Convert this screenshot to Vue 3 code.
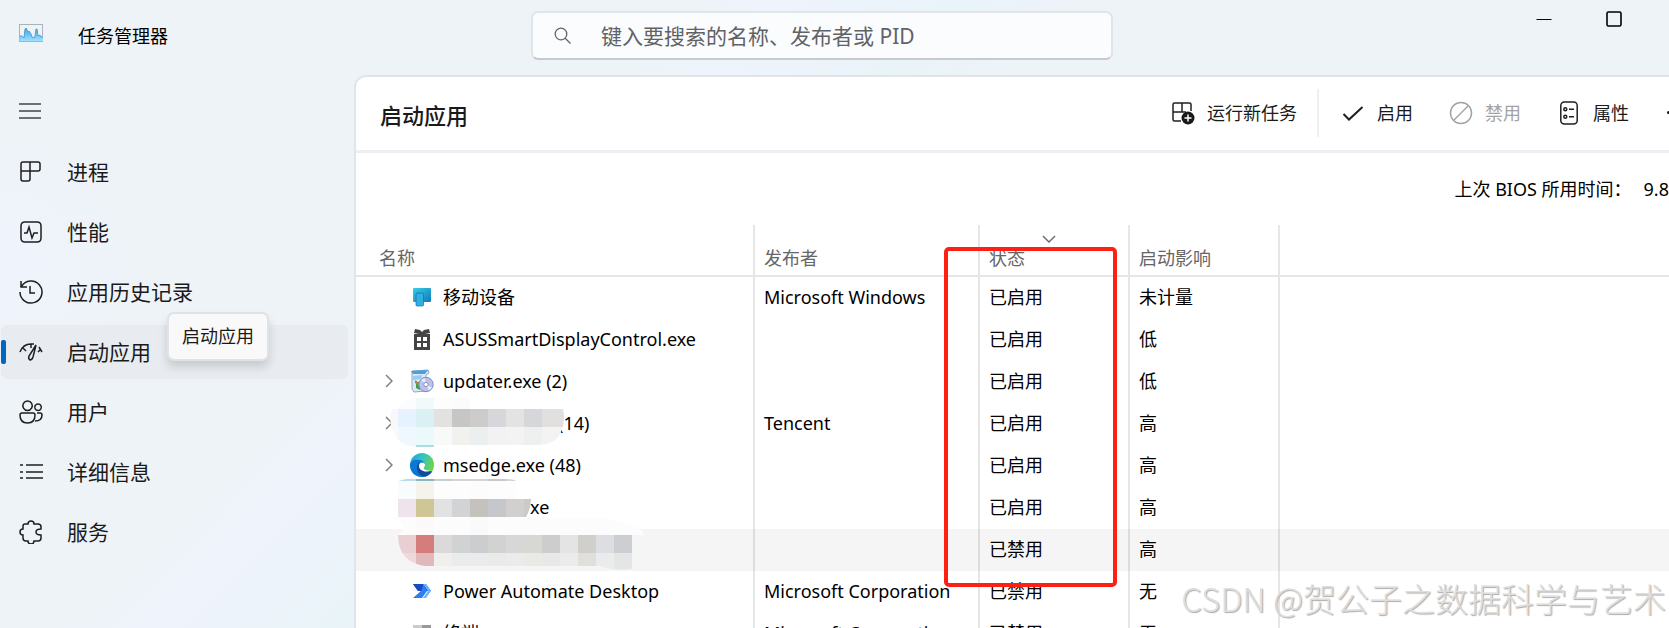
<template>
  <div class="window">
    <header class="titlebar">
      <div class="brand">
        <svg class="brand-logo" viewBox="0 0 24 18" aria-hidden="true">
          <defs>
            <linearGradient id="logoFill" x1="0" y1="0" x2="0" y2="1">
              <stop offset="0" stop-color="#3f9fdc" />
              <stop offset="1" stop-color="#9fe2ff" />
            </linearGradient>
          </defs>
          <rect x="0.5" y="0.5" width="23" height="17" fill="#f0f2f4" stroke="#a9b3bd" />
          <path
            d="M1 12l2 0 2 2 1-9 1-1 2 4 1-1 2 3 1 3 2 1 1-2 1-7 1 0 1 7 2-1 1 2 2 0v4H1z"
            fill="url(#logoFill)"
          />
          <path
            d="M1 12l2 0 2 2 1-9 1-1 2 4 1-1 2 3 1 3 2 1 1-2 1-7 1 0 1 7 2-1 1 2 2 0"
            fill="none"
            stroke="#4aa3dc"
          />
        </svg>
        <span class="brand-name">任务管理器</span>
      </div>
      <label class="search">
        <svg class="search-icon" viewBox="0 0 18 18" aria-hidden="true">
          <circle cx="7" cy="7" r="5.8" />
          <path d="M11.2 11.2L16.5 16.5" />
        </svg>
        <input
          class="search-input"
          type="text"
          aria-label="搜索"
          placeholder="键入要搜索的名称、发布者或 PID"
        />
      </label>
      <div class="window-controls">
        <button type="button" aria-label="最小化">
          <svg viewBox="0 0 16 16"><path d="M0.5 8.5h15" /></svg>
        </button>
        <button type="button" aria-label="最大化">
          <svg viewBox="0 0 16 16">
            <rect x="1" y="1" width="14" height="14" rx="1.5" stroke-width="1.6" />
          </svg>
        </button>
      </div>
    </header>

    <div class="body">
      <nav class="sidebar">
        <button class="menu-button" type="button" aria-label="导航">
          <svg viewBox="0 0 24 24"><path d="M1 5h22M1 12h22M1 19h22" /></svg>
        </button>
        <a
          v-for="item in navItems"
          :key="item.text"
          href="#"
          class="nav-item"
          :class="{ active: item.active }"
        >
          <svg class="nav-icon" viewBox="0 0 24 24" aria-hidden="true">
            <path v-for="d in item.paths" :key="d" :d="d" />
          </svg>
          <span>{{ item.text }}</span>
        </a>
        <div class="tooltip" role="tooltip">启动应用</div>
      </nav>

      <main class="panel">
        <div class="panel-header">
          <h1 class="panel-title">启动应用</h1>
          <div class="toolbar">
            <button class="tool tool-run" type="button">
              <svg viewBox="0 0 24 24" aria-hidden="true">
                <path d="M20 10V3.5Q20 2 18.5 2H3.500Q2 2 2 3.500V18.500Q2 20 3.500 20H10M2 11h9M11 2v9h4" />
                <circle cx="17" cy="17" r="6.500" class="solid" />
                <path d="M17 13.500v7M13.500 17h7" class="plus" />
              </svg>
              <span>运行新任务</span>
            </button>
            <button class="tool" type="button">
              <svg viewBox="0 0 24 24" aria-hidden="true">
                <path d="M2.500 13l5.500 5.500L21.500 6" stroke-width="2" />
              </svg>
              <span>启用</span>
            </button>
            <button class="tool" type="button" disabled>
              <svg viewBox="0 0 24 24" aria-hidden="true">
                <circle cx="12" cy="12" r="10.500" />
                <path d="M19 5L5 19" />
              </svg>
              <span>禁用</span>
            </button>
            <button class="tool" type="button">
              <svg viewBox="0 0 24 24" aria-hidden="true">
                <rect x="3.800" y="1" width="16.400" height="22" rx="3.500" />
                <circle cx="8.300" cy="8.300" r="1.500" />
                <circle cx="8.300" cy="15.700" r="1.500" />
                <path d="M12 8.300h5M12 15.700h5" />
              </svg>
              <span>属性</span>
            </button>
            <button class="tool-more" type="button" aria-label="更多">
              <i></i><i></i><i></i>
            </button>
          </div>
        </div>

        <div class="bios">
          <span>上次 BIOS 所用时间：</span>
          <span>9.8</span>
        </div>

        <div class="table-area">
          <table class="apps">
            <colgroup>
              <col class="col-name" />
              <col class="col-publisher" />
              <col class="col-status" />
              <col class="col-status" />
              <col />
            </colgroup>
            <thead>
              <tr>
                <th class="first">名称</th>
                <th>发布者</th>
                <th>
                  <svg class="sort" viewBox="0 0 14 8" aria-hidden="true">
                    <path d="M1 1l6 6 6-6" />
                  </svg>
                  状态
                </th>
                <th>启动影响</th>
                <th></th>
              </tr>
            </thead>
            <tbody>
              <tr v-for="(app, index) in apps" :key="index" :class="{ hovered: app.hovered }">
                <td>
                  <div class="name-cell">
                    <span class="expander">
                      <svg v-if="app.group" viewBox="0 0 8 14" aria-hidden="true">
                        <path d="M1 1l6 6-6 6" />
                      </svg>
                    </span>
                    <span class="app-icon">
                      <svg v-if="app.icon === 'mobile'" viewBox="0 0 24 24">
                        <defs>
                          <linearGradient id="mobileFill" x1="0" y1="0" x2="1" y2="1">
                            <stop offset="0" stop-color="#35d0e6" />
                            <stop offset="1" stop-color="#1478b8" />
                          </linearGradient>
                        </defs>
                        <rect x="3" y="3" width="18" height="14" rx="1" fill="url(#mobileFill)" />
                        <rect x="6" y="8" width="7.500" height="13" rx="1" fill="#2fb0e4" stroke="#15709f" stroke-width="0.700" />
                      </svg>
                      <svg v-else-if="app.icon === 'gift'" viewBox="0 0 24 24" fill="#444">
                        <path d="M5 2l5 1 2 2 2-2 5-1 1 4-5 1h5v16H4V7h5L4 6z" />
                        <path d="M7 10h4v4H7zM13 10h4v4h-4zM7 16h4v4H7zM13 16h4v4h-4z" fill="#fff" />
                      </svg>
                      <svg v-else-if="app.icon === 'installer'" viewBox="0 0 24 24">
                        <path d="M2 2l16-1 1 3-3 2v16l-12 1-2-3z" fill="#dce9f4" stroke="#8da9c4" />
                        <path d="M1 2l17-1-3 4H3z" fill="#4b9fe0" />
                        <path d="M3 7l9-1-1 4-8 1z" fill="#9ccbf0" />
                        <path d="M6 13h4v8l-4-2z" fill="#35a542" />
                        <path d="M5 11l3 2v3l-3-2z" fill="#e46b3f" />
                        <circle cx="16" cy="15.500" r="7.200" fill="#b9c1ee" stroke="#8088c0" />
                        <path d="M16 15.500L11 11l4-2zM16 15.500l6 3-3 3z" fill="#e7ebff" />
                        <circle cx="16" cy="15.500" r="2.200" fill="#fff" stroke="#8b8fb8" />
                      </svg>
                      <svg v-else-if="app.icon === 'edge'" viewBox="0 0 24 24">
                        <defs>
                          <linearGradient id="edgeTop" x1="0" y1="0" x2="1" y2="0.400">
                            <stop offset="0" stop-color="#1f9fdc" />
                            <stop offset="0.500" stop-color="#32c2c4" />
                            <stop offset="1" stop-color="#69d64b" />
                          </linearGradient>
                        </defs>
                        <circle cx="12" cy="12" r="12" fill="url(#edgeTop)" />
                        <path d="M0 12C1 7 5 6 9 7c4 0 6 3 6 6l-2 3 9 3c-2 3-6 5-10 5C5 24 0 19 0 12z" fill="#0c78d4" />
                        <path d="M9 9c-4 5-2 12 4 14.500 4 0 7-2 9-5.500-5 2-11 0-12-5z" fill="#114a9c" />
                        <path d="M12 9.500c-2 0-3 1.500-3 3.500 0 4.500 6 7 12 4.500-4 .5-8-1-7-3 2-2 1-5-2-5z" fill="#fff" />
                      </svg>
                      <svg v-else-if="app.icon === 'automate'" viewBox="0 0 24 24">
                        <path d="M3 5h13l5 7H8z" fill="#1b56d0" />
                        <path d="M13 5h3l5 7-5 7h-3l5-7z" fill="#66b7ff" />
                        <path d="M13 5l4 7-5 7H3l9-8z" fill="#2f7df0" />
                        <path d="M3 5h10l-2 7H8z" fill="#184bc0" />
                      </svg>
                      <svg v-else-if="app.icon === 'terminal'" viewBox="0 0 24 24">
                        <rect x="3" y="4" width="18" height="16" rx="1" fill="#444" />
                        <path d="M3 4h9v3H3z" fill="#ccc" />
                        <path d="M12 4h9v3h-9z" fill="#999" />
                      </svg>
                    </span>
                    <span v-if="app.censored" class="censored" :style="{ width: app.censored + 'px' }"></span>
                    <span>{{ app.name }}</span>
                  </div>
                </td>
                <td>{{ app.publisher }}</td>
                <td>{{ app.status }}</td>
                <td>{{ app.impact }}</td>
                <td></td>
              </tr>
            </tbody>
          </table>

          <!-- mosaic over the private names -->
          <svg class="mosaic" viewBox="388 390 260 184" aria-hidden="true">
            <defs>
              <clipPath id="blobA">
                <path d="M398 409Q404 398 420 398H470V409H563Q566 420 561 432Q556 445 536 445L434 447H416Q400 446 394 434Q388 422 392 409z" />
              </clipPath>
              <clipPath id="blobB">
                <path d="M398 481L406 479H505Q514 479 516 481V499H531Q531 508 526 517H398z" />
              </clipPath>
              <clipPath id="blobC">
                <path d="M392 517L600 518Q640 524 645 535H632V569Q612 571 600 566L425 566Q398 562 398 535L404 529Q402 522 392 517z" />
              </clipPath>
            </defs>
            <g v-for="patch in mosaic" :key="patch.clip" :clip-path="`url(#${patch.clip})`">
              <template v-for="row in patch.rows" :key="row.y">
                <rect
                  v-for="(color, i) in row.colors"
                  :key="i"
                  :x="380 + i * 18"
                  :y="row.y"
                  width="18"
                  :height="row.h"
                  :fill="color"
                  shape-rendering="crispEdges"
                />
              </template>
            </g>
          </svg>
          <div class="marker"></div>
        </div>
      </main>
    </div>
    <div class="watermark">CSDN @贺公子之数据科学与艺术</div>
  </div>
</template>

<script setup>
const navItems = [
  {
    text: "进程",
    paths: ["M4 2h15q2 0 2 2v5q0 2-2 2H2V4q0-2 2-2zM2 11v8q0 2 2 2h5q2 0 2-2V2"],
  },
  {
    text: "性能",
    paths: [
      "M6 2h12q4 0 4 4v12q0 4-4 4H6q-4 0-4-4V6q0-4 4-4z",
      "M5 13h3l2-6 3 11 2-5h4",
    ],
  },
  {
    text: "应用历史记录",
    paths: ["M2 1v6h6M2.500 6.500A11 11 0 1 1 1 12", "M11 6v7h5"],
  },
  {
    text: "启动应用",
    active: true,
    paths: [
      "M1 12Q4 4 12 4h3M4 8l3 3M12 4v4M20 7l3 5M22 9l-3 3",
      "M17 5L10 16q-1 3 1 4 2 0 3-3z",
    ],
  },
  {
    text: "用户",
    paths: [
      "M8.500 1a4.700 4.700 0 1 0 .1 0zM19 4a3.300 3.300 0 1 0 .1 0z",
      "M3 13h11q2 0 2 2 0 8-7.500 8T1 15q0-2 2-2zM18 13h3q2 0 2 2 0 6-7 6",
    ],
  },
  {
    text: "详细信息",
    paths: ["M7 5h17M7 12h17M7 18h17", "M1 5h3M1 12h3M1 18h3"],
  },
  {
    text: "服务",
    paths: [
      "M6 4h3q0-3 3-3t3 3h4q3 0 3 3v2q-5 0-5 3t5 3v3q0 3-3 3h-4q0 3-3 3t-3-3H7q-3 0-3-3v-3q-3 0-3-3t3-3V6q0-2 2-2z",
    ],
  },
];

const apps = [
  { name: "移动设备", icon: "mobile", publisher: "Microsoft Windows", status: "已启用", impact: "未计量" },
  { name: "ASUSSmartDisplayControl.exe", icon: "gift", status: "已启用", impact: "低" },
  { name: "updater.exe (2)", icon: "installer", group: true, status: "已启用", impact: "低" },
  { name: "(14)", group: true, censored: 115, publisher: "Tencent", status: "已启用", impact: "高" },
  { name: "msedge.exe (48)", icon: "edge", group: true, status: "已启用", impact: "高" },
  { name: "xe", censored: 87, status: "已启用", impact: "高" },
  { name: "", hovered: true, status: "已禁用", impact: "高" },
  { name: "Power Automate Desktop", icon: "automate", publisher: "Microsoft Corporation", status: "已禁用", impact: "无" },
  { name: "终端", icon: "terminal", publisher: "Microsoft Corporation", status: "已禁用", impact: "无" },
];

// every row starts at the same left edge, one colour per 18px block
const mosaic = [
  {
    clip: "blobA",
    rows: [
      { y: 391, h: 18, colors: ["#fcfcfc", "#fafcfd", "#f1f9fa", "#fdfdfd", "#fbfbfb", "#fdfdfd"] },
      { y: 409, h: 18, colors: ["#f8f8fa", "#e6f2ff", "#daf0f2", "#e3e2e0", "#c6c6c6", "#cdcccb", "#d5d7db", "#e3e3e3", "#d6d7da", "#e1e0df", "#e1e0df"] },
      { y: 427, h: 18, colors: ["#f9f9fb", "#eff8ff", "#ecf9fb", "#f8f9f9", "#f1f2ee", "#ecefef", "#f2f2f2", "#f3f3f3", "#eeefef", "#f3f3f3", "#f3f3f3"] },
      { y: 445, h: 2, colors: ["#fff", "#eff8ff", "#a8e0e0"] },
    ],
  },
  {
    clip: "blobB",
    rows: [
      { y: 479, h: 2, colors: ["#fff", "#b9dcec", "#8ab3c4", "#c8cdd0", "#d4d4d4", "#d4d4d4", "#c8c8c8", "#d4d4d4"] },
      { y: 481, h: 18, colors: ["#fff", "#f8fcff", "#f4f4ec", "#fdfdfd", "#fdfdfd", "#fcfcfc", "#fdfdfd", "#fdfdfd"] },
      { y: 499, h: 18, colors: ["#fff", "#f0e4ec", "#cec694", "#e2e2e2", "#d1d3d4", "#c5c2be", "#c5c7ca", "#d2d0ce", "#cbcac9"] },
    ],
  },
  {
    clip: "blobC",
    rows: [
      { y: 517, h: 18, colors: ["#fdfdfd", "#fdfbfb", "#fbf9f9", "#fcfcfc", "#fcfcfc", "#fafafa", "#fcfcfc", "#fcfcfc", "#fcfcfc", "#fcfcfc", "#fcfcfc", "#fcfcfc", "#fcfcfc", "#fcfcfc", "#fcfcfc"] },
      { y: 535, h: 18, colors: ["#e9cfd2", "#e9cfd2", "#d57c7c", "#dcdad8", "#d0d2d4", "#cccdce", "#d2d2d3", "#d7d7d7", "#d7d7d4", "#cdcdce", "#e4e4e5", "#d1cfcc", "#dcdee2", "#cdced1"] },
      { y: 553, h: 18, colors: ["#f0dada", "#eed8d9", "#e1b9ba", "#f1efed", "#e9ecea", "#eaebec", "#eaebe9", "#ebebeb", "#e9e9e6", "#e7e8e7", "#ebebeb", "#dfdfdb", "#eaebec", "#e4e6e5"] },
    ],
  },
];
</script>

<style>
body {
  overflow: hidden;
}
</style>

<style scoped>
.window,
.window * {
  box-sizing: border-box;
}

.window {
  position: relative;
  display: flex;
  flex-direction: column;
  height: 100vh;
  overflow: hidden;
  color: #1a1a1a;
  font-family: "Noto Sans", "Noto Sans CJK SC", sans-serif;
  font-size: 18px;
  line-height: 24px;
  background:
    radial-gradient(circle at 0 270px, #eff3fc 0, transparent 160px),
    linear-gradient(135deg, transparent 480px, #eff3fc 560px, #e9f4f8 680px, transparent 760px),
    #eef3f8;
}

button {
  padding: 0;
  border: none;
  background: none;
  color: inherit;
  font: inherit;
}

svg {
  display: block;
}

.titlebar {
  display: flex;
  flex: none;
  align-items: flex-start;
  height: 75px;
}

.brand {
  display: flex;
  gap: 35px;
  width: 531px;
  padding: 24px 0 0 19px;
}

.brand-logo {
  width: 24px;
  height: 18px;
}

.brand-name {
  color: #000;
}

.search {
  display: flex;
  flex: 0 1 582px;
  align-items: center;
  gap: 29px;
  height: 49px;
  margin-top: 11px;
  padding-left: 21px;
  border: 2px solid #e0e5ea;
  border-bottom-color: #c6cbd1;
  border-radius: 7px;
  background: #fbfcfe;
}

.search-icon {
  flex: none;
  width: 18px;
  height: 18px;
  fill: none;
  stroke: #666;
  stroke-width: 1.3;
}

.search-input {
  flex: 1;
  min-width: 0;
  padding: 0;
  border: none;
  outline: none;
  background: none;
  color: #1a1a1a;
  font: inherit;
  font-size: 21px;
  line-height: 30px;
}

.search-input::placeholder {
  color: #606265;
  opacity: 1;
}

.window-controls {
  display: flex;
  margin-left: auto;
  padding-right: 20px;
}

.window-controls button {
  display: flex;
  justify-content: center;
  width: 70px;
  padding-top: 11px;
}

.window-controls svg {
  width: 16px;
  height: 16px;
  fill: none;
  stroke: #000;
}

.body {
  display: flex;
  flex: 1;
  min-height: 0;
}

.sidebar {
  position: relative;
  flex: none;
  width: 354px;
  padding: 24px 6px 0 1px;
}

.menu-button {
  display: block;
  margin: 0 0 22px 17px;
}

.menu-button svg {
  width: 24px;
  height: 24px;
  fill: none;
  stroke: #444;
  stroke-width: 1.5;
}

.nav-item {
  position: relative;
  display: flex;
  align-items: center;
  gap: 24px;
  height: 54px;
  margin-bottom: 6px;
  padding-left: 18px;
  border-radius: 6px;
  color: #1a1a1a;
  font-size: 21px;
  line-height: 30px;
  text-decoration: none;
}

.nav-item.active {
  background: #e8ecf0;
}

.nav-item.active::before {
  content: "";
  position: absolute;
  left: 0;
  top: 15px;
  width: 5px;
  height: 24px;
  border-radius: 2px;
  background: #0067c0;
}

.nav-icon {
  width: 24px;
  height: 24px;
  fill: none;
  stroke: #1f1f1f;
  stroke-width: 1.5;
}

.tooltip {
  position: absolute;
  left: 167px;
  top: 237px;
  z-index: 2;
  padding: 10px 13px 11px;
  border: 2px solid #dfe3e7;
  border-radius: 7px;
  background: #f9f9f9;
  box-shadow: 0 6px 10px rgba(0, 0, 0, 0.14);
}

.panel {
  flex: 1;
  min-width: 0;
  overflow: hidden;
  border: 2px solid #e1e5e9;
  border-right: none;
  border-bottom: none;
  border-radius: 12px 0 0 0;
  background: #fff;
}

.panel-header {
  display: flex;
  align-items: center;
  justify-content: space-between;
  height: 76px;
  padding: 0 0 2px 24px;
  border-bottom: 3px solid #eeeff3;
}

.panel-title {
  margin: 4px 0 0;
  font-size: 22px;
  font-weight: 500;
  line-height: 30px;
}

.toolbar {
  display: flex;
  align-items: center;
  gap: 36px;
}

.tool {
  display: flex;
  align-items: center;
  gap: 12px;
  white-space: nowrap;
}

.tool svg {
  width: 24px;
  height: 24px;
  fill: none;
  stroke: #1f1f1f;
  stroke-width: 1.5;
}

.tool .solid {
  fill: #1a1a1a;
  stroke: none;
}

.tool .plus {
  stroke: #fff;
}

.tool:disabled {
  color: #a3a3a3;
}

.tool:disabled svg {
  stroke: #a3a3a3;
}

.tool-run {
  height: 48px;
  margin-right: -14px;
  padding-right: 20px;
  border-right: 2px solid #eeeff1;
}

.tool-more {
  display: flex;
  gap: 5px;
  width: 4px;
  padding-left: 2px;
  overflow: hidden;
}

.tool-more i {
  flex: none;
  width: 3px;
  height: 3px;
  border-radius: 50%;
  background: #1a1a1a;
}

.bios {
  display: flex;
  align-items: center;
  justify-content: flex-end;
  gap: 12px;
  height: 72px;
  color: #000;
}

.table-area {
  position: relative;
}

.apps {
  width: 100%;
  border-spacing: 0;
  table-layout: fixed;
  color: #000;
}

.col-name {
  width: 399px;
}

.col-publisher {
  width: 225px;
}

.col-status {
  width: 150px;
}

.apps th {
  height: 52px;
  padding: 0 20px 5px 9px;
  border-right: 2px solid #e6e6e6;
  border-bottom: 2px solid #e6e6e6;
  color: #666;
  font-weight: 400;
  text-align: left;
  vertical-align: bottom;
}

.apps th.first {
  padding-left: 23px;
}

.apps td {
  height: 42px;
  padding: 0 0 2px 9px;
  border-right: 2px solid rgba(0, 0, 0, 0.1);
  white-space: nowrap;
}

.apps td:first-child {
  padding-left: 29px;
}

.apps th:last-child,
.apps td:last-child {
  border-right: none;
}

.hovered {
  background: #f5f5f5;
}

.sort {
  width: 14px;
  height: 8px;
  margin: 0 auto 3px;
  fill: none;
  stroke: #666;
  stroke-width: 1.4;
}

.name-cell {
  display: flex;
  align-items: center;
}

.expander {
  width: 8px;
  margin-right: 17px;
}

.expander svg {
  width: 8px;
  height: 14px;
  fill: none;
  stroke: #808080;
  stroke-width: 1.5;
}

.app-icon {
  width: 24px;
  height: 24px;
  margin-right: 9px;
}

.mosaic {
  position: absolute;
  left: 32px;
  top: 165px;
  width: 260px;
  height: 184px;
}

.marker {
  position: absolute;
  left: 588px;
  top: 22px;
  width: 173px;
  height: 340px;
  border: 4px solid #ff2014;
  border-radius: 5px;
}

.watermark {
  position: absolute;
  right: 3px;
  bottom: 8px;
  color: #dedede;
  font-family: "Noto Sans CJK SC", sans-serif;
  font-size: 33px;
  font-weight: 300;
  line-height: 44px;
  text-shadow: 1px 1px 1px #aaa;
  white-space: nowrap;
}
</style>
